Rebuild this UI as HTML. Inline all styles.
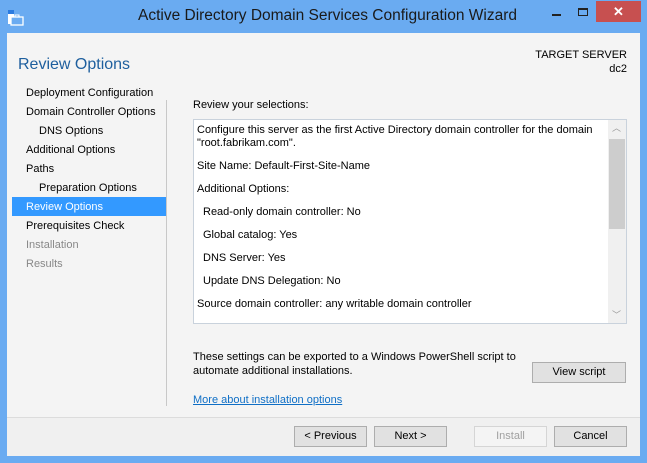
<!DOCTYPE html>
<html><head><style>
*{margin:0;padding:0;box-sizing:border-box}
body{width:647px;height:463px;background:#6aabf1;font-family:"Liberation Sans",sans-serif;font-size:11px;color:#000;position:relative;overflow:hidden}
.a{position:absolute;white-space:nowrap}
#client{position:absolute;left:7px;top:33px;width:633px;height:423px;background:#f4f4f4}
#foot{position:absolute;left:7px;top:417px;width:633px;height:39px;background:#f0f0f0;border-top:1px solid #dcdcdc}
.btn{position:absolute;height:21px;background:#e1e1e1;border:1px solid #adadad;text-align:center;line-height:19px;font-size:11px}
.nav{position:absolute;left:26px;font-size:11px}
</style></head><body>
<svg class="a" style="left:7px;top:9px" width="18" height="17" viewBox="0 0 18 17">
<rect x="1" y="1" width="6" height="14" fill="#fff"/><rect x="1" y="1" width="6" height="4" fill="#2b7be0"/>
<rect x="4" y="8" width="12" height="8" fill="#6aabf1" stroke="#fff" stroke-width="1.3"/><rect x="8" y="6" width="4" height="2" fill="none" stroke="#fff"/>
</svg>
<div class="a" style="left:0;width:647px;text-align:center;top:7px;font-size:15.5px;color:#1a1a1a;padding-left:8px">Active Directory Domain Services Configuration Wizard</div>
<div class="a" style="left:552px;top:14px;width:9px;height:2px;background:#222"></div>
<div class="a" style="left:578px;top:8px;width:10px;height:8px;border:1px solid #222;border-top-width:2px"></div>
<div class="a" style="left:596px;top:1px;width:45px;height:21px;background:#c75050;color:#fff;text-align:center;font-size:13px;font-weight:bold;line-height:21px">✕</div>
<div id="client"></div>
<div class="a" style="left:18px;top:56px;font-size:16px;color:#1e5f9e">Review Options</div>
<div class="a" style="right:20px;top:48px;font-size:11px;text-align:right;line-height:14px">TARGET SERVER<br>dc2</div>
<div class="nav" style="top:87px">Deployment Configuration</div>
<div class="nav" style="top:106px">Domain Controller Options</div>
<div class="nav" style="top:125px;left:39px">DNS Options</div>
<div class="nav" style="top:144px">Additional Options</div>
<div class="nav" style="top:163px">Paths</div>
<div class="nav" style="top:182px;left:39px">Preparation Options</div>
<div class="a" style="left:12px;top:197px;width:154px;height:19px;background:#3399ff"></div>
<div class="nav" style="top:201px;color:#fff">Review Options</div>
<div class="nav" style="top:220px">Prerequisites Check</div>
<div class="nav" style="top:239px;color:#888">Installation</div>
<div class="nav" style="top:258px;color:#888">Results</div>
<div class="a" style="left:166px;top:100px;width:1px;height:306px;background:#c8c8c8"></div>
<div class="a" style="left:193px;top:99px">Review your selections:</div>
<div class="a" style="left:193px;top:119px;width:434px;height:205px;background:#fff;border:1px solid #c9d2dc"></div>
<div class="a" style="left:608px;top:120px;width:18px;height:203px;background:#f0f0f0"></div>
<div class="a" style="left:609px;top:139px;width:16px;height:90px;background:#cdcdcd"></div>
<div class="a" style="left:612px;top:121px;color:#999;font-size:9px">︿</div>
<div class="a" style="left:612px;top:308px;color:#999;font-size:9px">﹀</div>
<div class="a" style="left:197px;top:124px;line-height:13px">Configure this server as the first Active Directory domain controller for the domain<br>"root.fabrikam.com".</div>
<div class="a" style="left:197px;top:160px">Site Name: Default-First-Site-Name</div>
<div class="a" style="left:197px;top:183px">Additional Options:</div>
<div class="a" style="left:203px;top:206px">Read-only domain controller: No</div>
<div class="a" style="left:203px;top:229px">Global catalog: Yes</div>
<div class="a" style="left:203px;top:252px">DNS Server: Yes</div>
<div class="a" style="left:203px;top:275px">Update DNS Delegation: No</div>
<div class="a" style="left:197px;top:298px">Source domain controller: any writable domain controller</div>
<div class="a" style="left:193px;top:350px;line-height:14px">These settings can be exported to a Windows PowerShell script to<br>automate additional installations.</div>
<div class="btn" style="left:532px;top:362px;width:94px">View script</div>
<div class="a" style="left:193px;top:394px;color:#0f6fc6;text-decoration:underline">More about installation options</div>
<div id="foot"></div>
<div class="btn" style="left:294px;top:426px;width:73px">&lt; Previous</div>
<div class="btn" style="left:374px;top:426px;width:73px">Next &gt;</div>
<div class="btn" style="left:474px;top:426px;width:73px;background:#f4f4f4;border-color:#d5d5d5;color:#a0a0a0">Install</div>
<div class="btn" style="left:554px;top:426px;width:73px">Cancel</div>
</body></html>
